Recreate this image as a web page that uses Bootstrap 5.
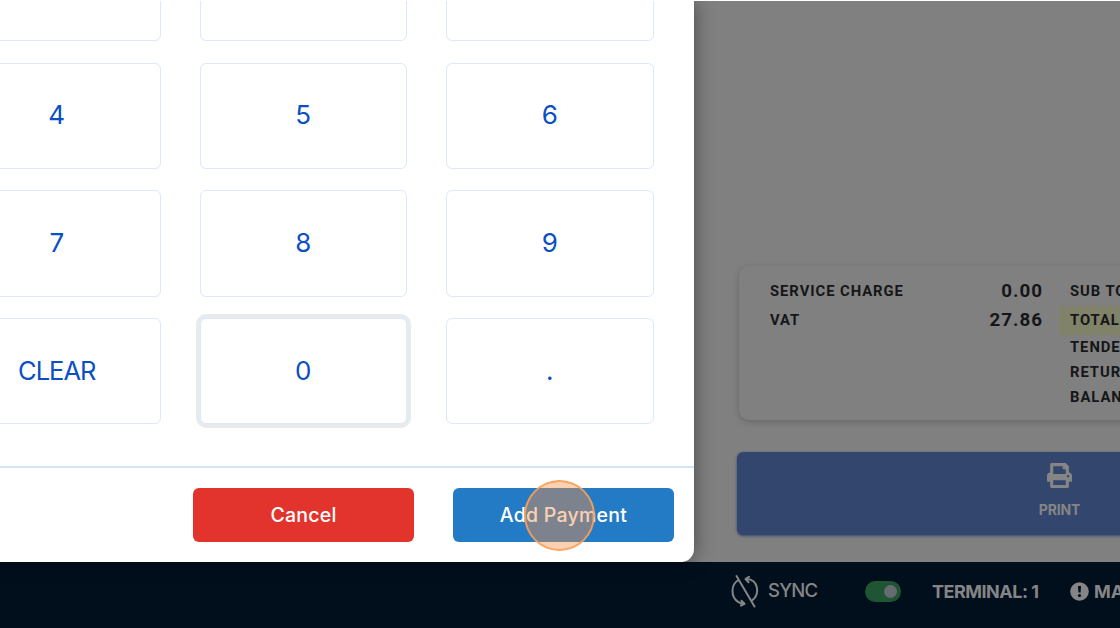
<!DOCTYPE html>
<html lang="en">
<head>
  <meta charset="UTF-8" />
  <meta name="viewport" content="width=device-width, initial-scale=1.0"/>
  <title>Add Payment - POS</title>
  <link href="https://cdn.jsdelivr.net/npm/bootstrap@5.3.3/dist/css/bootstrap.min.css" rel="stylesheet" />
  <style>
    body {
      height: 628px;
      padding-top: 1px;
      background: #fff;
      font-family: Inter, "Liberation Sans", sans-serif;
      font-feature-settings: "cv11";
    }

    .pos-screen {
      height: 627px;
      background: #808080;
    }

    .order-panel {
      height: 561px;
      padding: 265px 0 0 737px;
    }

    /* Totals */
    .totals-box {
      width: 645px;
      height: 154px;
      margin-left: 2px;
      padding: 10.5px 0 0 31px;
      border-radius: 10px;
      background: #808080;
      box-shadow: 0 2px 7px rgba(0, 0, 0, 0.2);
      color: #151618;
      font: 700 14.8px/29px Roboto, sans-serif;
      letter-spacing: 0.95px;
    }

    .totals-left {
      width: 273px;
    }

    .totals-left .amount {
      font-size: 18.8px;
      letter-spacing: 1px;
    }

    .totals-right {
      width: 300px;
      margin-left: 16px;
    }

    .totals-right div {
      height: 25px;
      padding-left: 11px;
      line-height: 25px;
    }

    .totals-right .first-line {
      height: 29px;
      line-height: 29px;
    }

    .totals-right .total-line {
      height: 29px;
      background: #80826a;
      line-height: 29px;
    }

    .print-btn {
      width: 645px;
      height: 83px;
      margin-top: 32px;
      padding-top: 11px;
      border-radius: 6px;
      background: #33466d;
      box-shadow: 0 1px 3px #33466d;
      color: #858585;
      font-size: 14px;
      font-weight: 700;
      line-height: 20px;
      letter-spacing: -0.15px;
    }

    .print-btn svg {
      margin-bottom: 12px;
    }

    /* Status bar */
    .status-bar {
      height: 66px;
      padding: 0 0 8px 731px;
      background: #010f1d;
      color: #858585;
      font-size: 18px;
    }

    .sync-label {
      width: 97px;
      margin-left: 9px;
      font-weight: 500;
      font-size: 18.5px;
      letter-spacing: -0.8px;
    }

    .toggle {
      width: 36px;
      height: 21px;
      padding-right: 4px;
      border-radius: 11px;
      background: #1f5532;
    }

    .toggle span {
      width: 13px;
      height: 13px;
      background: #666b70;
    }

    .terminal {
      width: 138px;
      margin-left: 31px;
      font-weight: 700;
      letter-spacing: -0.5px;
    }

    .branch {
      margin-left: 5px;
      font-weight: 700;
    }

    /* Payment dialog */
    .pay-dialog {
      position: absolute;
      top: 1px;
      left: -87px;
      width: 781px;
      height: 561px;
      border-radius: 0 0 13px 0;
      background: #fff;
      box-shadow: 0 0 20px rgba(0, 0, 0, 0.45);
      clip-path: inset(0 -30px -30px 0);
    }

    .keypad {
      height: 465px;
      padding: 0 40.5px 41.6px 40px;
      display: grid;
      grid-template-columns: repeat(3, 1fr);
      grid-auto-rows: 106.4px;
      gap: 21.3px 39px;
      align-content: end;
    }

    .key {
      padding-bottom: 2px;
      border: 1px solid #dce8fb;
      border-radius: 6px;
      background: #fff;
      color: #0b4fc4;
      font-size: 26px;
      line-height: 1;
    }

    .key.active-key {
      box-shadow: 0 0 0 4px #e8ebec;
    }

    .key-word {
      font-size: 25.5px;
      letter-spacing: -1px;
    }

    .dialog-actions {
      height: 96px;
      padding: 0 20px 0 0;
      border-top: 2px solid #d2e4fa;
      gap: 39px;
    }

    .action-btn {
      width: 221px;
      height: 54px;
      padding-top: 3px;
      border: 0;
      border-radius: 6px;
      color: #fff;
      font-size: 19.5px;
      font-weight: 500;
      letter-spacing: 0.25px;
    }

    .cancel-btn {
      background: #e2342d;
    }

    .add-btn {
      background: #237bc6;
    }

    .click-ring {
      position: absolute;
      left: 523.5px;
      top: 479.5px;
      width: 71px;
      height: 71px;
      border: 2.5px solid rgba(248, 160, 88, 0.9);
      border-radius: 50%;
      background: rgba(249, 143, 66, 0.42);
    }
  </style>
</head>
<body class="overflow-hidden position-relative">
  <div class="pos-screen overflow-hidden">
    <div class="order-panel">
      <div class="totals-box d-flex">
        <div class="totals-left">
          <div class="d-flex justify-content-between"><span>SERVICE CHARGE</span><span class="amount">0.00</span></div>
          <div class="d-flex justify-content-between"><span>VAT</span><span class="amount">27.86</span></div>
        </div>
        <div class="totals-right">
          <div class="first-line">SUB TOTAL</div>
          <div class="total-line">TOTAL</div>
          <div>TENDERED</div>
          <div>RETURN</div>
          <div>BALANCE</div>
        </div>
      </div>
      <div class="print-btn d-flex flex-column align-items-center">
        <svg width="25" height="25" viewBox="0 0 512 512" fill="currentColor"><path d="M448 192V77c0-8-3-16-9-22L393 9c-6-6-14-9-22-9H96C78 0 64 14 64 32v160c-35 0-64 29-64 64v112c0 9 7 16 16 16h48v96c0 18 14 32 32 32h320c18 0 32-14 32-32v-96h48c9 0 16-7 16-16V256c0-35-29-64-64-64zm-64 256H128v-96h256v96zm0-224H128V64h192v48c0 9 7 16 16 16h48v96zm48 72c-13 0-24-11-24-24s11-24 24-24 24 11 24 24-11 24-24 24z"/></svg>
        <span>PRINT</span>
      </div>
    </div>
    <div class="status-bar d-flex align-items-center text-nowrap">
      <svg class="flex-shrink-0" width="28" height="34" viewBox="0 0 28 34" fill="none" stroke="currentColor" stroke-width="2" stroke-linecap="round" stroke-linejoin="round">
        <path d="M5.500 2L23.500 32.500M7.500 6C-.5 10.500-.5 23.500 7.500 28.200Q10 29.700 12.500 29.800M10.500 26.800L13.500 29.800L10 31.500M15.500 5C27.500 5 29.500 20.500 20.500 27M18 2.800L14.500 5L17.500 8.200"/>
      </svg>
      <span class="sync-label flex-shrink-0">SYNC</span>
      <div class="toggle d-flex align-items-center justify-content-end flex-shrink-0"><span class="rounded-circle"></span></div>
      <span class="terminal flex-shrink-0">TERMINAL: 1</span>
      <svg class="flex-shrink-0" width="19" height="19" viewBox="0 0 19 19"><circle cx="9.500" cy="9.500" r="9.300" fill="currentColor"/><path d="M8 4h3l-.4 6.500H8.400z" fill="#010f1d"/><circle cx="9.500" cy="13.500" r="1.600" fill="#010f1d"/></svg>
      <span class="branch">MAIN</span>
    </div>
  </div>

  <div class="pay-dialog">
    <div class="keypad overflow-hidden">
      <button class="key">1</button>
      <button class="key">2</button>
      <button class="key">3</button>
      <button class="key">4</button>
      <button class="key">5</button>
      <button class="key">6</button>
      <button class="key">7</button>
      <button class="key">8</button>
      <button class="key">9</button>
      <button class="key key-word">CLEAR</button>
      <button class="key active-key">0</button>
      <button class="key">.</button>
    </div>
    <div class="dialog-actions d-flex align-items-center justify-content-end">
      <button class="action-btn cancel-btn">Cancel</button>
      <button class="action-btn add-btn">Add Payment</button>
    </div>
  </div>
  <div class="click-ring"></div>

  <script src="https://cdn.jsdelivr.net/npm/bootstrap@5.3.3/dist/js/bootstrap.bundle.min.js"></script>
</body>
</html>
